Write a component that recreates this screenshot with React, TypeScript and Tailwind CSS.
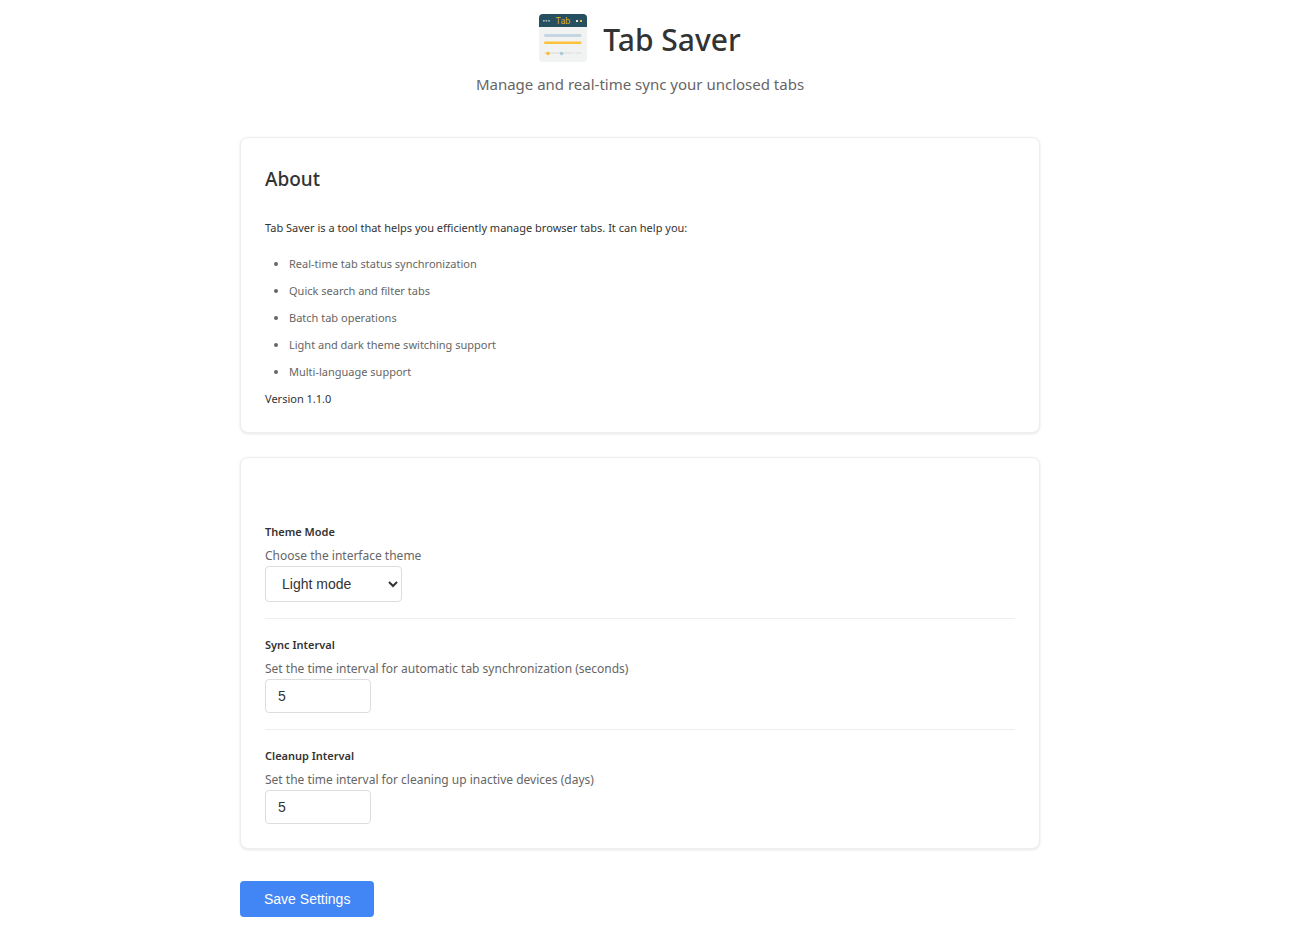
import { useState } from 'react';
import type { ReactNode } from 'react';

const FEATURES = [
  'Real-time tab status synchronization',
  'Quick search and filter tabs',
  'Batch tab operations',
  'Light and dark theme switching support',
  'Multi-language support',
];

function Logo() {
  return (
    <svg className="size-12 shrink-0" viewBox="0 0 48 48" aria-hidden="true">
      <rect width="48" height="48" rx="4" fill="#f1f2f2" />
      <path d="M0 13V4a4 4 0 0 1 4-4h40a4 4 0 0 1 4 4v9z" fill="#264f60" />
      <g fill="#a9bcc6">
        <rect x="4" y="6" width="1.6" height="1.6" />
        <rect x="6.6" y="6" width="1.6" height="1.6" />
        <rect x="9.2" y="6" width="1.6" height="1.6" />
      </g>
      <text
        x="24"
        y="10"
        textAnchor="middle"
        fontSize="9"
        fontFamily="'Liberation Sans Narrow', Roboto, sans-serif"
        fill="#dcae1c"
      >
        Tab
      </text>
      <rect x="37" y="6" width="2" height="2" fill="#dce8ee" />
      <rect x="41" y="6" width="2" height="2" fill="#f5b942" />
      <rect x="5" y="20" width="37.5" height="3" rx="1.5" fill="#c5d5e2" />
      <rect x="5" y="27.5" width="37.5" height="2.6" rx="1.3" fill="#fcc13a" />
      <rect x="5" y="38" width="37.5" height="2" rx="1" fill="#e5e6e6" />
      <circle cx="9" cy="39.5" r="1.8" fill="#fdbb2d" />
      <circle cx="22.5" cy="39.5" r="1.8" fill="#a9ccd6" />
      <circle cx="35" cy="39.5" r="1.6" fill="#f0f0f0" />
    </svg>
  );
}

function Card({ children }: { children: ReactNode }) {
  return (
    <section className="mb-6 rounded-lg border border-[#eeeeee] bg-white p-6 shadow-[0_1px_3px_rgba(0,0,0,0.1)]">
      {children}
    </section>
  );
}

function Setting({ id, label, hint, children }: { id: string; label: string; hint: string; children: ReactNode }) {
  return (
    <div className="border-b border-[#eeeeee] py-4 last:border-b-0 last:pb-0">
      <label htmlFor={id} className="block text-[11px] leading-5 font-semibold">
        {label}
      </label>
      <p className="mt-1 text-xs leading-5 text-[#666666]">{hint}</p>
      {children}
    </div>
  );
}

const FIELD = "block rounded border border-[#dddddd] bg-white font-['Liberation_Sans',Arial,sans-serif] text-sm";

export default function App() {
  const [theme, setTheme] = useState('light');
  const [sync, setSync] = useState('5');
  const [cleanup, setCleanup] = useState('5');

  return (
    <div className="bg-white pr-[10px] font-['Noto_Sans','Open_Sans',sans-serif] text-[#333333]">
      <main className="mx-auto max-w-[800px] pb-8">
        <header className="pt-3 text-center">
          <div className="flex items-center justify-center gap-4">
            <Logo />
            <h1 className="pt-1 text-[30px] leading-[48px] font-medium">Tab Saver</h1>
          </div>
          <p className="mt-2 mb-10 text-[15px] leading-[25px] text-[#666666]">
            Manage and real-time sync your unclosed tabs
          </p>
        </header>

        <Card>
          <h2 className="text-[19px] leading-[34px] font-medium">About</h2>
          <div className="mt-[22px] text-[11px] leading-[19px]">
            <p className="leading-5">
              Tab Saver is a tool that helps you efficiently manage browser tabs. It can help you:
            </p>
            <ul className="mt-4 list-disc pl-6 text-[#666666]">
              {FEATURES.map((feature) => (
                <li key={feature} className="mb-2">
                  {feature}
                </li>
              ))}
            </ul>
            <p>Version 1.1.0</p>
          </div>
        </Card>

        <Card>
          <div className="pt-6">
            <Setting id="theme" label="Theme Mode" hint="Choose the interface theme">
              <select
                id="theme"
                value={theme}
                onChange={(e) => setTheme(e.target.value)}
                className={FIELD + ' h-9 w-[137px] px-3'}
              >
                <option value="light">Light mode</option>
                <option value="dark">Dark mode</option>
              </select>
            </Setting>
            <Setting
              id="sync"
              label="Sync Interval"
              hint="Set the time interval for automatic tab synchronization (seconds)"
            >
              <input
                id="sync"
                type="number"
                value={sync}
                onChange={(e) => setSync(e.target.value)}
                className={FIELD + ' h-[34px] w-[106px] px-3'}
              />
            </Setting>
            <Setting
              id="cleanup"
              label="Cleanup Interval"
              hint="Set the time interval for cleaning up inactive devices (days)"
            >
              <input
                id="cleanup"
                type="number"
                value={cleanup}
                onChange={(e) => setCleanup(e.target.value)}
                className={FIELD + ' h-[34px] w-[106px] px-3'}
              />
            </Setting>
          </div>
        </Card>

        <button
          type="button"
          className="mt-2 h-9 rounded bg-[#4285f4] px-6 font-['Liberation_Sans',Arial,sans-serif] text-sm text-white"
        >
          Save Settings
        </button>
      </main>
    </div>
  );
}
